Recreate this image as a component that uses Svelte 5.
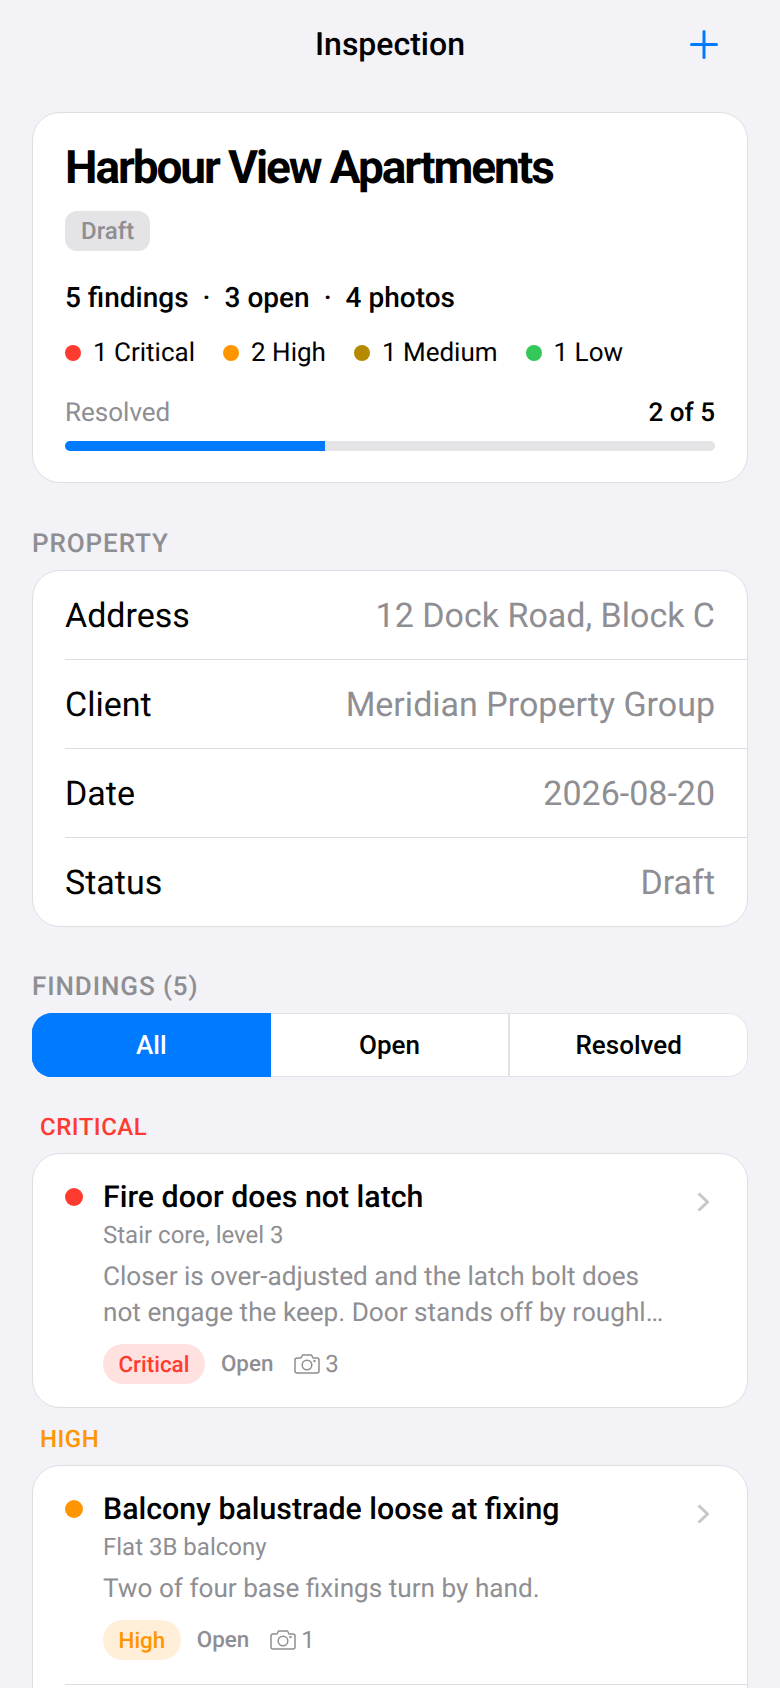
<script>
  const severities = [
    { label: '1 Critical', color: '#ff3b30' },
    { label: '2 High', color: '#ff9500' },
    { label: '1 Medium', color: '#b58a00' },
    { label: '1 Low', color: '#34c759' }
  ];

  const property = [
    ['Address', '12 Dock Road, Block C'],
    ['Client', 'Meridian Property Group'],
    ['Date', '2026-08-20'],
    ['Status', 'Draft']
  ];

  const filters = ['All', 'Open', 'Resolved'];
  let active = 'All';

  // descriptions are cut to fit two lines in the list
  const clip = (s, n) => (s.length > n ? s.slice(0, n) + '…' : s);

  const groups = [
    {
      name: 'Critical',
      color: '#ff3b30',
      tint: '#ffe2e0',
      more: false,
      title: 'Fire door does not latch',
      place: 'Stair core, level 3',
      text: 'Closer is over-adjusted and the latch bolt does not engage the keep. Door stands off by roughly',
      photos: 3
    },
    {
      name: 'High',
      color: '#ff9500',
      tint: '#ffefd9',
      more: true,
      title: 'Balcony balustrade loose at fixing',
      place: 'Flat 3B balcony',
      text: 'Two of four base fixings turn by hand.',
      photos: 1
    }
  ];
</script>

<div class="screen">
  <header class="nav">
    <h1>Inspection</h1>
    <button class="add" aria-label="Add">
      <svg width="28" height="29" viewBox="0 0 28 29" fill="none" stroke="#007aff" stroke-width="3" stroke-linecap="round">
        <path d="M14 1.5v26M1.5 14.5h25" />
      </svg>
    </button>
  </header>

  <section class="card summary">
    <h2>Harbour View Apartments</h2>
    <span class="badge">Draft</span>
    <div class="stats">
      <span>5 findings</span><span class="sep">·</span><span>3 open</span><span class="sep">·</span><span>4 photos</span>
    </div>
    <div class="sevs">
      {#each severities as s}
        <span class="sev"><i class="dot" style="background:{s.color}"></i>{s.label}</span>
      {/each}
    </div>
    <div class="resolved">
      <span class="muted">Resolved</span>
      <strong>2 of 5</strong>
    </div>
    <div class="bar"><div class="fill" style="width:40%"></div></div>
  </section>

  <div class="section-label">PROPERTY</div>
  <section class="card rows">
    {#each property as [k, v]}
      <div class="row">
        <span>{k}</span>
        <span class="value">{v}</span>
      </div>
    {/each}
  </section>

  <div class="section-label findings-label">FINDINGS (5)</div>
  <div class="segments">
    {#each filters as f}
      <button class="seg" class:on={active === f} on:click={() => (active = f)}>{f}</button>
    {/each}
  </div>

  {#each groups as g}
    <div class="group-label" style="color:{g.color}">{g.name.toUpperCase()}</div>
    <section class="card group">
      <article class="finding" class:ruled={g.more}>
        <i class="fdot" style="background:{g.color}"></i>
        <div class="body">
          <h3>{g.title}</h3>
          <div class="place">{g.place}</div>
          <p>{clip(g.text, 94)}</p>
          <div class="meta">
            <span class="pill" style="background:{g.tint};color:{g.color}">{g.name}</span>
            <span class="state">Open</span>
            <span class="photos">
              <svg width="26" height="20" viewBox="0 0 26 20" fill="none" stroke="#8e8e93" stroke-width="1.5" stroke-linejoin="round">
                <path d="M3 4h4l1.5-3h9L19 4h4a2 2 0 0 1 2 2v11a2 2 0 0 1-2 2H3a2 2 0 0 1-2-2V6a2 2 0 0 1 2-2z" />
                <circle cx="13" cy="11" r="4.8" />
                <circle cx="20.5" cy="7" r="0.5" fill="#8e8e93" />
              </svg>
              {g.photos}
            </span>
          </div>
        </div>
        <svg class="chev" width="12" height="20" viewBox="0 0 12 20" fill="none" stroke="#c7c7cc" stroke-width="3">
          <path d="M1.5 1.5l9 8.5-9 8.5" />
        </svg>
      </article>
      {#if g.more}
        <div class="next"></div>
      {/if}
    </section>
  {/each}
</div>

<style>
  :global(body) {
    margin: 0;
    background: #f2f2f7;
  }

  .screen {
    height: 1688px;
    overflow: hidden;
    padding: 0 32px;
    box-sizing: border-box;
    background: #f2f2f7;
    font-family: Roboto, "Liberation Sans", sans-serif;
    text-rendering: geometricPrecision;
    color: #000;
  }

  .nav {
    position: relative;
    height: 88px;
    margin-bottom: 24px;
    display: flex;
    align-items: center;
    justify-content: center;
  }

  .nav h1 {
    margin: 0;
    font-size: 32px;
    font-weight: 500;
  }

  .add {
    position: absolute;
    right: 30px;
    top: 30px;
    padding: 0;
    border: none;
    background: none;
    display: flex;
  }

  .card {
    background: #fff;
    border: 1px solid #dedee3;
    border-radius: 28px;
    box-sizing: border-box;
  }

  .summary {
    padding: 29px 32px 31px;
  }

  .summary h2 {
    margin: 0;
    font-size: 46px;
    line-height: 52px;
    font-weight: 700;
    letter-spacing: -2.1px;
  }

  .badge {
    display: block;
    width: fit-content;
    margin-top: 17px;
    height: 40px;
    line-height: 40px;
    padding: 0 16px;
    border-radius: 12px;
    background: #e4e4e7;
    color: #8e8e93;
    font-size: 24px;
    font-weight: 500;
  }

  .stats {
    margin-top: 30px;
    display: flex;
    font-size: 28px;
    line-height: 34px;
    font-weight: 500;
  }

  .sep {
    margin: 0 14px;
  }

  .sevs {
    margin-top: 21px;
    display: flex;
    gap: 28px;
    font-size: 26px;
    line-height: 34px;
  }

  .sev {
    display: flex;
    align-items: center;
    gap: 12px;
  }

  .dot {
    width: 16px;
    height: 16px;
    border-radius: 50%;
  }

  .resolved {
    margin-top: 26px;
    display: flex;
    justify-content: space-between;
    font-size: 26px;
    line-height: 34px;
  }

  .resolved strong {
    font-weight: 500;
  }

  .muted {
    color: #8e8e93;
  }

  .bar {
    margin-top: 11px;
    height: 10px;
    border-radius: 5px;
    background: #e4e4e7;
    overflow: hidden;
  }

  .fill {
    height: 100%;
    background: #007aff;
  }

  .section-label {
    margin-top: 44px;
    margin-bottom: 9px;
    font-size: 26px;
    line-height: 34px;
    font-weight: 500;
    letter-spacing: 0.9px;
    color: #8e8e93;
  }

  .row {
    height: 89px;
    box-sizing: border-box;
    margin-left: 32px;
    padding: 2px 32px 0 0;
    display: flex;
    align-items: center;
    justify-content: space-between;
    font-size: 34px;
    border-top: 1px solid #dcdce0;
  }

  .row:first-child {
    border-top: none;
    height: 88px;
  }

  .value {
    color: #8e8e93;
  }

  .findings-label {
    margin-top: 43px;
  }

  .segments {
    display: grid;
    grid-template-columns: repeat(3, 1fr);
    height: 64px;
    margin-bottom: 35px;
    border-radius: 20px;
    overflow: hidden;
  }

  .seg {
    border: 1px solid #e2e2e6;
    border-left: none;
    background: #fff;
    padding: 0;
    font: 500 26px Roboto, sans-serif;
    color: #000;
  }

  .seg:first-child {
    border-left: 1px solid #e2e2e6;
  }

  .seg:last-child {
    border-left: 1px solid #e2e2e6;
    border-radius: 0 20px 20px 0;
  }

  .seg.on {
    background: #007aff;
    border-color: #007aff;
    color: #fff;
  }

  .group-label {
    margin: 16px 0 11px 8px;
    font-size: 24px;
    line-height: 30px;
    font-weight: 500;
    letter-spacing: 0.5px;
  }

  .finding {
    position: relative;
    display: flex;
    margin-left: 32px;
    padding: 24px 0 23px;
  }

  .finding.ruled {
    padding-bottom: 24px;
    border-bottom: 1px solid #dcdce0;
  }

  .fdot {
    flex: none;
    width: 18px;
    height: 18px;
    margin-top: 10px;
    margin-right: 20px;
    border-radius: 50%;
  }

  .body {
    flex: 1;
    min-width: 0;
    padding-right: 80px;
  }

  .body h3 {
    margin: 0;
    font-size: 30.3px;
    line-height: 40px;
    font-weight: 500;
  }

  .place {
    font-size: 24px;
    line-height: 34px;
    color: #8e8e93;
  }

  .body p {
    margin: 7px 0 0;
    font-size: 26.15px;
    line-height: 36px;
    color: #8e8e93;
  }

  .meta {
    margin-top: 13px;
    display: flex;
    align-items: center;
    height: 40px;
    font-size: 22.4px;
    color: #8e8e93;
  }

  .pill {
    height: 40px;
    line-height: 42px;
    padding: 0 15.5px;
    border-radius: 20px;
    font-weight: 500;
  }

  .state {
    margin-left: 16px;
    font-weight: 500;
  }

  .photos {
    margin-left: 21px;
    display: flex;
    align-items: center;
    gap: 5px;
    font-size: 24px;
  }

  .chev {
    position: absolute;
    right: 38px;
    top: 38px;
  }

  .next {
    height: 200px;
  }
</style>
